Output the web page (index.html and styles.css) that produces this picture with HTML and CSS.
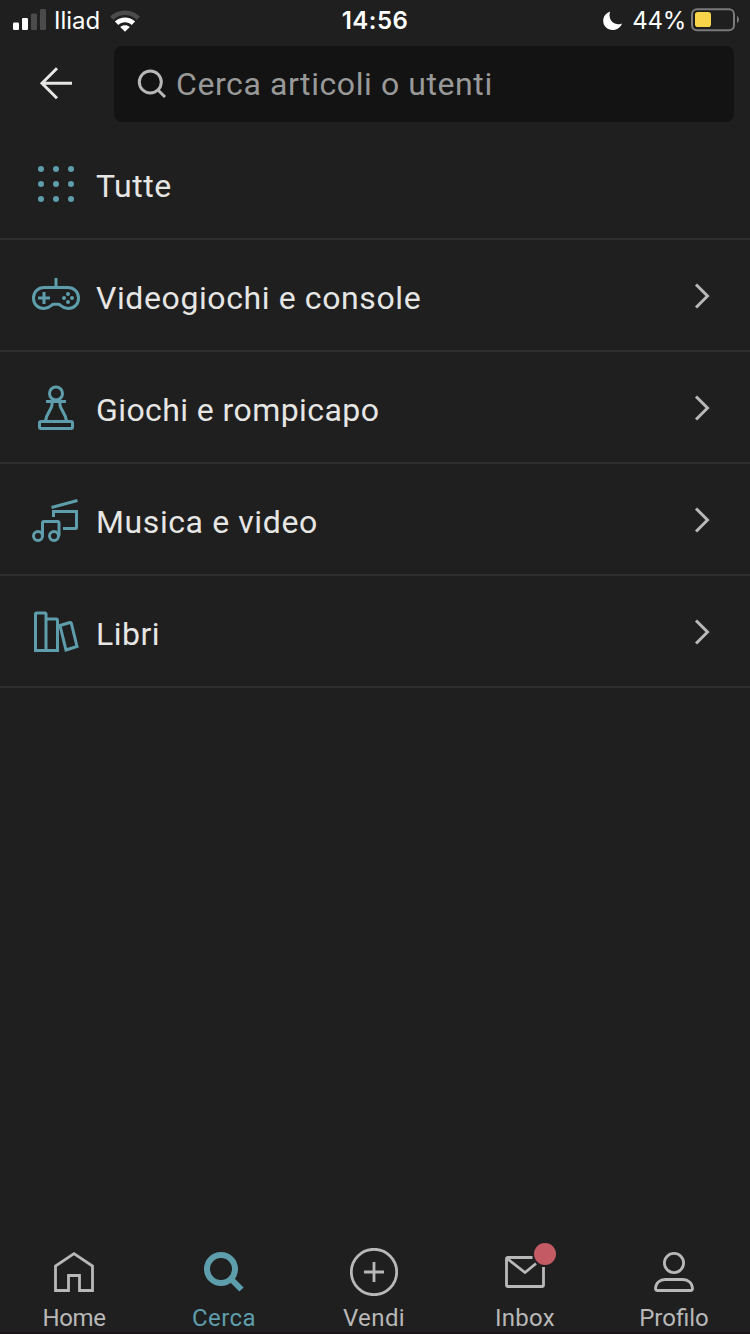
FILE: index.html
```html
<!DOCTYPE html>
<html lang="it">
<head>
<meta charset="utf-8">
<title>Cerca</title>
<link rel="stylesheet" href="styles.css">
</head>
<body>
<div class="screen">
  <div class="status">
    <div class="status-side">
      <svg class="signal" width="34" height="22" viewBox="0 0 34 22"><rect x="0" y="13.5" width="6" height="7.5" rx="1.3" fill="#fff"/><rect x="9" y="9" width="6" height="12" rx="1.3" fill="#fff"/><rect x="18" y="4.500" width="6" height="16.500" rx="1.300" fill="#4b4b4b"/><rect x="27" y="0" width="6" height="21" rx="1.300" fill="#4b4b4b"/></svg>
      <span class="carrier">Iliad</span>
      <svg class="wifi" width="30" height="22" viewBox="0 0 30 22"><path d="M0 6.500C8-1.500 22-1.500 30 6.500L26.700 9.900C20.200 3.500 9.800 3.500 3.300 9.900Z" fill="#4b4b4b"/><path d="M4.900 11.500C10.500 6 19.500 6 25.100 11.500L21.700 14.900C18 11.300 12 11.300 8.300 14.900Z" fill="#fff"/><path d="M10.200 17C12.900 14.600 17.100 14.600 19.800 17L15 21.700Z" fill="#fff"/></svg>
    </div>
    <span class="clock">14:56</span>
    <div class="status-side status-right">
      <svg class="moon" width="20" height="20" viewBox="0 0 20 20"><path d="M7.200.500A12 12 0 0 0 6.500 4C6.500 9.500 10.500 13.200 15.500 13.200C17 13.200 18 12.900 19 12.500C17.500 16.500 14 19 9.800 19C4.300 19 .2 15 .2 9.800C.2 5.500 3 2 7.200.500Z" fill="#fff"/></svg>
      <span class="percent">44%</span>
      <svg class="battery" width="49" height="24" viewBox="0 0 49 24"><rect x="1" y="1.200" width="42" height="21" rx="5" fill="none" stroke="#7a7a7a" stroke-width="2"/><rect x="4" y="4" width="16" height="15" rx="2.800" fill="#f9d649"/><path d="M46 8C48.600 9 48.600 14 46 15Z" fill="#7a7a7a"/></svg>
    </div>
  </div>

  <header class="header">
    <svg class="back" width="48" height="48" viewBox="0 0 48 48" fill="none" stroke="#e6e6e4" stroke-width="3"><path d="M25 8.300L10 23.300L25 38.300M10 23.300H40"/></svg>
    <div class="search">
      <svg width="32" height="32" viewBox="0 0 32 32" fill="none" stroke="#b8b8b8" stroke-width="3"><circle cx="14.300" cy="14" r="11"/><path d="M22 22L29 29"/></svg>
      <span class="placeholder">Cerca articoli o utenti</span>
    </div>
  </header>

  <main class="list">
    <div class="row">
      <svg class="category" width="48" height="48" viewBox="0 0 48 48" fill="#5e9dab"><circle cx="9" cy="9" r="3"/><circle cx="24" cy="9" r="3"/><circle cx="39" cy="9" r="3"/><circle cx="9" cy="24" r="3"/><circle cx="24" cy="24" r="3"/><circle cx="39" cy="24" r="3"/><circle cx="9" cy="39" r="3"/><circle cx="24" cy="39" r="3"/><circle cx="39" cy="39" r="3"/></svg>
      <span class="label l-tutte">Tutte</span>
    </div>
    <div class="row">
      <svg class="category line" width="48" height="48" viewBox="0 0 48 48"><path d="M24 6V15.500M12 15.500H36C42 15.500 46.500 20 46.500 26C46.500 32.500 42 36.500 36 36.500C32.500 36.500 30.500 35 28.500 33.300C27.700 32.500 27 32.300 26 32.300H22C21 32.300 20.300 32.500 19.500 33.300C17.500 35 15.500 36.500 12 36.500C6 36.500 1.500 32.500 1.500 26C1.500 20 6 15.500 12 15.500ZM12 20V32M6 26H18"/><g fill="#5e9dab" stroke="none"><circle cx="36" cy="22" r="2"/><circle cx="32" cy="26" r="2"/><circle cx="40" cy="26" r="2"/><circle cx="36" cy="30" r="2"/></g></svg>
      <span class="label l-video">Videogiochi e console</span>
      <svg class="chevron" width="20" height="30" viewBox="0 0 20 30"><path d="M4 3.500L15.500 15L4 26.500"/></svg>
    </div>
    <div class="row">
      <svg class="category line" width="48" height="48" viewBox="0 0 48 48"><circle cx="24" cy="9.500" r="6.500"/><path d="M14 17.500H34M20 18V21C19.500 26 14.500 29 13.500 37M28 18V21C28.500 26 33.500 29 34.500 37"/><rect x="7.500" y="37.500" width="33" height="7" rx="1.500"/></svg>
      <span class="label l-giochi">Giochi e rompicapo</span>
      <svg class="chevron" width="20" height="30" viewBox="0 0 20 30"><path d="M4 3.500L15.500 15L4 26.500"/></svg>
    </div>
    <div class="row">
      <svg class="category line" width="48" height="48" viewBox="0 0 48 48"><path d="M19.500 11.500L45.500 4.500M21.500 21V15.500H44.500V31.500Q44.500 32.500 43.500 32.500H31M10.500 40V27Q10.500 25.500 12 25.500H25.500Q27 25.500 27 27V40"/><circle cx="6" cy="40" r="4.500"/><circle cx="22" cy="40" r="4.500"/></svg>
      <span class="label l-musica">Musica e video</span>
      <svg class="chevron" width="20" height="30" viewBox="0 0 20 30"><path d="M4 3.500L15.500 15L4 26.500"/></svg>
    </div>
    <div class="row">
      <svg class="category line" width="48" height="48" viewBox="0 0 48 48"><path d="M3.500 42.500V6Q3.500 5 4.500 5H13Q14 5 14 6V42.500ZM14 11H24Q25.500 11 25.500 12.500V42.500H14M28 17.500L38 14.500Q39 14.200 39.300 15.200L45 38.500L34 42Z"/></svg>
      <span class="label l-libri">Libri</span>
      <svg class="chevron" width="20" height="30" viewBox="0 0 20 30"><path d="M4 3.500L15.500 15L4 26.500"/></svg>
    </div>
  </main>

  <nav class="tabs">
    <div class="tab">
      <svg class="tab-icon" width="48" height="48" viewBox="0 0 48 48"><path d="M5.500 42.500V18L24 5.700L42.500 18V42.500H29.500V27.500H18.500V42.500Z"/></svg>
      <span class="tab-label t-home">Home</span>
    </div>
    <div class="tab active">
      <svg class="tab-icon" width="48" height="48" viewBox="0 0 48 48"><circle cx="21" cy="21" r="14"/><path d="M31 31L41.500 41.500"/></svg>
      <span class="tab-label t-cerca">Cerca</span>
    </div>
    <div class="tab">
      <svg class="tab-icon" width="48" height="48" viewBox="0 0 48 48"><circle cx="24" cy="24" r="22.700"/><path d="M24 14V34M14 24H34"/></svg>
      <span class="tab-label t-vendi">Vendi</span>
    </div>
    <div class="tab">
      <span class="mail">
        <svg class="tab-icon" width="48" height="48" viewBox="0 0 48 48"><path d="M32.500 9.500H8Q6.500 9.500 6.500 11V37Q6.500 38.500 8 38.500H42Q43.500 38.500 43.500 37V19M7 10.500L25 24.500L36 15.500"/></svg>
        <i class="badge"></i>
      </span>
      <span class="tab-label t-inbox">Inbox</span>
    </div>
    <div class="tab">
      <svg class="tab-icon" width="48" height="48" viewBox="0 0 48 48"><circle cx="24" cy="15" r="9.600"/><path d="M7.500 42.500Q5.500 42.500 5.500 40.500C5.500 35 10 31.500 15 31.500H33C38 31.500 42.500 35 42.500 40.500Q42.500 42.500 40.500 42.500Z"/></svg>
      <span class="tab-label t-profilo">Profilo</span>
    </div>
  </nav>
</div>
</body>
</html>
```

FILE: styles.css
```css
* { box-sizing: border-box; }
body { margin: 0; background: #1f1f1f; font-family: Roboto, "Liberation Sans", sans-serif; }
svg { display: block; flex: none; }
.screen { width: 750px; height: 1334px; display: flex; flex-direction: column; background: #1f1f1f; border-bottom: 2px solid #1b1519; overflow: hidden; }

.status { height: 40px; display: grid; grid-template-columns: 1fr auto 1fr; align-items: center; padding: 0 10px 0 13px; color: #fff; font-family: Inter, "Liberation Sans", sans-serif; font-size: 24px; line-height: 38px; white-space: nowrap; }
.status-side { display: flex; align-items: center; }
.status-right { justify-content: flex-end; }
.carrier { margin-left: 7px; padding-top: 2px; letter-spacing: 0; }
.wifi { margin: 1px 0 0 10px; }
.clock { margin-left: -3px; padding-top: 2px; font-weight: 600; letter-spacing: .5px; }
.moon { margin: 2px 9px 0 0; }
.percent { margin-right: 5px; padding-top: 2px; letter-spacing: -.3px; }

.header { height: 88px; display: flex; padding: 6px 16px 6px 32px; }
.back { margin-top: 14px; }
.search { flex: 1; height: 76px; margin-left: 34px; padding-left: 22px; display: flex; align-items: center; background: #131313; border-radius: 8px; }
.placeholder { margin-left: 8px; color: #999; font-size: 32px; letter-spacing: .58px; white-space: nowrap; }

.row { height: 112px; display: flex; align-items: center; padding: 2px 38px 0 32px; border-bottom: 2px solid #2e2e2e; color: #e6e6e4; }
.label { flex: 1; margin: 3px 0 0 16px; font-size: 32px; letter-spacing: .5px; white-space: nowrap; }
.l-video { letter-spacing: .6px; }
.l-giochi { letter-spacing: .42px; }
.l-musica { letter-spacing: .6px; }
.line { fill: none; stroke: #5e9dab; stroke-width: 3; }
.chevron { fill: none; stroke: #b8b8b8; stroke-width: 3; }

.tabs { margin: auto 1px 0 -1px; display: grid; grid-template-columns: repeat(5, 1fr); height: 84px; }
.tab { display: flex; flex-direction: column; align-items: center; color: #b8b8b8; }
.tab-icon { fill: none; stroke: currentColor; stroke-width: 2.8; }
.tab-label { margin-top: 7px; font-size: 24px; line-height: 30px; letter-spacing: .4px; }
.t-home { letter-spacing: -.4px; }
.t-inbox { margin-left: 2px; letter-spacing: .25px; }
.t-profilo { letter-spacing: 0; }
.active { color: #5e9dab; }
.active .tab-icon { stroke-width: 6; }
.mail { position: relative; }
.badge { position: absolute; left: 34px; top: -5px; width: 22px; height: 22px; border-radius: 50%; background: #c45b64; }
```
